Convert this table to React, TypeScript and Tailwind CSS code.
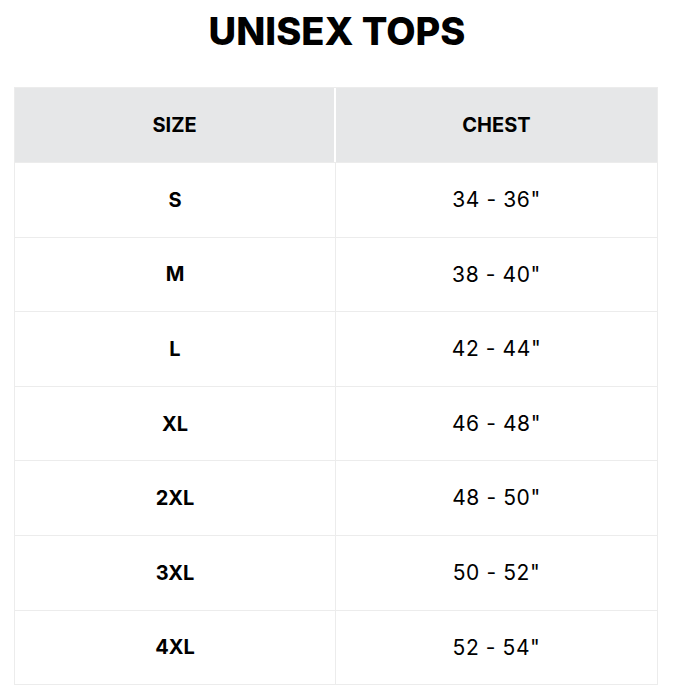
export default function App() {
  const rows = [
    ["S", '34 - 36"'],
    ["M", '38 - 40"'],
    ["L", '42 - 44"'],
    ["XL", '46 - 48"'],
    ["2XL", '48 - 50"'],
    ["3XL", '50 - 52"'],
    ["4XL", '52 - 54"'],
  ];

  return (
    <div className="min-h-screen bg-white font-['Inter',sans-serif] text-black">
      <h1 className="pt-[10px] pr-[6px] text-center text-[38px] font-extrabold leading-[42px]">UNISEX TOPS</h1>
      <div className="ml-[14px] mt-[35px] w-[644px] border border-[#ececec]">
        <div className="grid h-[74px] grid-cols-2 bg-[#e6e7e8]">
          <div className="flex items-center justify-center border-r-2 border-white text-[20px] font-bold">SIZE</div>
          <div className="flex items-center justify-center text-[20px] font-bold">CHEST</div>
        </div>
        {rows.map(([size, chest]) => (
          <div key={size} className="grid h-[74.6px] grid-cols-2 border-t border-[#ececec]">
            <div className="flex items-center justify-center border-r border-[#ececec] text-[20px] font-bold">{size}</div>
            <div className="flex items-center justify-center text-[21px] font-normal tracking-[0.6px]">{chest}</div>
          </div>
        ))}
      </div>
    </div>
  );
}
